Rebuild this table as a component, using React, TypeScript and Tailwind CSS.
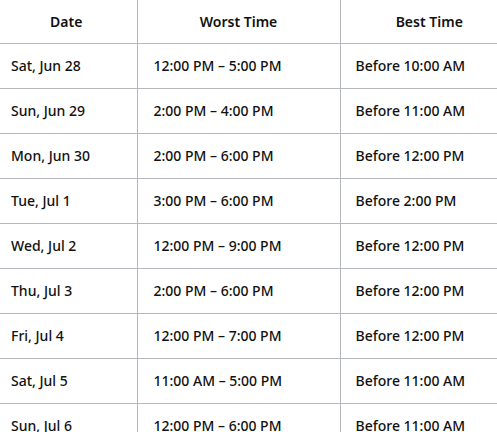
import React from "react";

const rows = [
  { date: "Sat, Jun 28", worst: "12:00 PM – 5:00 PM", best: "Before 10:00 AM" },
  { date: "Sun, Jun 29", worst: "2:00 PM – 4:00 PM", best: "Before 11:00 AM" },
  { date: "Mon, Jun 30", worst: "2:00 PM – 6:00 PM", best: "Before 12:00 PM" },
  { date: "Tue, Jul 1", worst: "3:00 PM – 6:00 PM", best: "Before 2:00 PM" },
  { date: "Wed, Jul 2", worst: "12:00 PM – 9:00 PM", best: "Before 12:00 PM" },
  { date: "Thu, Jul 3", worst: "2:00 PM – 6:00 PM", best: "Before 12:00 PM" },
  { date: "Fri, Jul 4", worst: "12:00 PM – 7:00 PM", best: "Before 12:00 PM" },
  { date: "Sat, Jul 5", worst: "11:00 AM – 5:00 PM", best: "Before 11:00 AM" },
  { date: "Sun, Jul 6", worst: "12:00 PM – 6:00 PM", best: "Before 11:00 AM" },
];

export default function App() {
  return (
    <div className="w-[497px] h-[432px] overflow-hidden bg-white font-['Noto_Sans',sans-serif] text-[14px] text-[#111]">
      <table className="-ml-[4px] w-[522px] table-fixed border-collapse">
        <colgroup>
          <col className="w-[141px]" />
          <col className="w-[203px]" />
          <col className="w-[178px]" />
        </colgroup>
        <thead>
          <tr className="h-[43px] border-b border-[#b4b8bc]">
            <th className="font-semibold text-center border-r border-[#b4b8bc]">Date</th>
            <th className="font-semibold text-center border-r border-[#b4b8bc]">Worst Time</th>
            <th className="font-semibold text-center">Best Time</th>
          </tr>
        </thead>
        <tbody>
          {rows.map((r) => (
            <tr key={r.date} className="h-[45px] border-b border-[#b4b8bc]">
              <td className="pl-[15px] font-medium border-r border-[#b4b8bc]">{r.date}</td>
              <td className="pl-[16px] font-medium border-r border-[#b4b8bc]">{r.worst}</td>
              <td className="pl-[15px] font-medium">{r.best}</td>
            </tr>
          ))}
        </tbody>
      </table>
    </div>
  );
}
